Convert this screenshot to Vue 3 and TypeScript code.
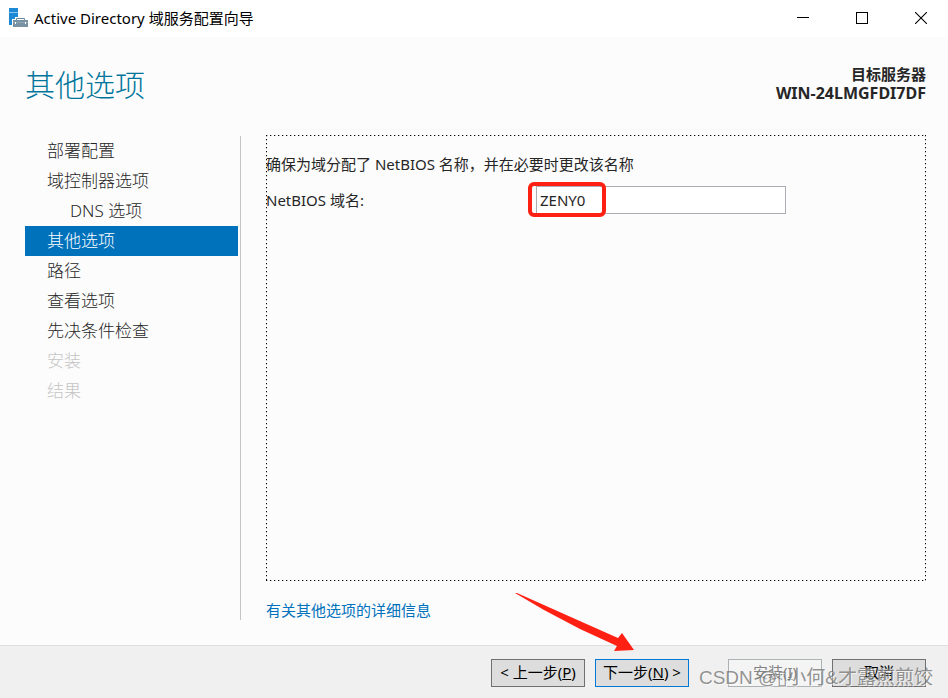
<script setup lang="ts">
import { ref } from 'vue'

interface Step {
  label: string
  indent?: boolean
  disabled?: boolean
}

const steps: Step[] = [
  { label: '部署配置' },
  { label: '域控制器选项' },
  { label: 'DNS 选项', indent: true },
  { label: '其他选项' },
  { label: '路径' },
  { label: '查看选项' },
  { label: '先决条件检查' },
  { label: '安装', disabled: true },
  { label: '结果', disabled: true },
]

const current = ref(3)
const netbiosName = ref('ZENY0')
</script>

<template>
  <div class="window">
    <header class="titlebar">
      <svg class="app-icon" width="20" height="20" viewBox="0 0 20 20" aria-hidden="true">
        <rect x="0" y="0" width="9" height="17" fill="#1e8ad6" />
        <rect x="0" y="4" width="9" height="1" fill="#8cc6ee" />
        <path d="M3 19V11H6V9H17V11H20V19H3z" fill="#fff" />
        <path d="M7.500 12.500V10.500H15.500V12.500" fill="none" stroke="#6f8a9c" />
        <rect x="4" y="12" width="15" height="7" fill="#7892a4" />
        <path d="M4 14.500H19" stroke="#8fa5b4" />
        <rect x="6" y="14" width="1" height="2" fill="#fff" />
        <rect x="16" y="14" width="1" height="2" fill="#fff" />
      </svg>
      <span class="app-title">Active Directory 域服务配置向导</span>
      <div class="controls">
        <button type="button" aria-label="最小化">
          <svg width="12" height="12" viewBox="0 0 12 12"><path d="M0 5.500H12" stroke="#000" /></svg>
        </button>
        <button type="button" aria-label="最大化">
          <svg width="12" height="12" viewBox="0 0 12 12"><rect x=".5" y=".5" width="11" height="11" fill="none" stroke="#000" /></svg>
        </button>
        <button type="button" aria-label="关闭">
          <svg width="12" height="12" viewBox="0 0 12 12"><path d="M0 0L12 12M12 0L0 12" stroke="#000" stroke-width="1.100" /></svg>
        </button>
      </div>
    </header>

    <section class="heading">
      <h1>其他选项</h1>
      <div class="target">
        <div>目标服务器</div>
        <div class="host">WIN-24LMGFDI7DF</div>
      </div>
    </section>

    <div class="body">
      <nav class="steps">
        <button
          v-for="(step, i) in steps"
          :key="step.label"
          type="button"
          class="step"
          :class="{ active: i === current, indent: step.indent }"
          :disabled="step.disabled"
          @click="current = i"
        >{{ step.label }}</button>
      </nav>

      <main class="content">
        <div class="panel">
          <p>确保为域分配了 NetBIOS 名称，并在必要时更改该名称</p>
          <div class="field">
            <label for="netbios">NetBIOS 域名:</label>
            <div class="input-wrap">
              <input id="netbios" v-model="netbiosName" type="text" />
              <span class="highlight"></span>
            </div>
          </div>
        </div>
        <a class="more" href="#">有关其他选项的详细信息</a>
      </main>
    </div>

    <footer class="footer">
      <button type="button" class="btn">&lt; 上一步(<u>P</u>)</button>
      <div class="next-wrap">
        <button type="button" class="btn primary">下一步(<u>N</u>) &gt;</button>
        <svg class="arrow" width="120" height="60" viewBox="0 0 120 60" aria-hidden="true">
          <path d="M1 1L3 1L68 30L104 46L108 41L120 58L100 59L103 54L66 37L30 18Z" fill="#ff2014" />
        </svg>
      </div>
      <button type="button" class="btn install" disabled>安装(<u>I</u>)</button>
      <button type="button" class="btn">取消</button>
      <span class="watermark">CSDN @▯小何&amp;才露煎煎饺</span>
    </footer>
  </div>
</template>

<style>
body {
  margin: 0;
  background: #fcfcfc;
}
</style>

<style scoped>
.window {
  display: flex;
  flex-direction: column;
  min-height: 100vh;
  background: #fcfcfc;
  color: #262626;
  font: 15px/20px "Noto Sans", "Noto Sans CJK SC", sans-serif;
}

button,
input {
  font: inherit;
  color: inherit;
}

.titlebar {
  display: flex;
  align-items: center;
  height: 36px;
  padding: 0 0 1px 9px;
  background: #fff;
  color: #000;
}

.app-title {
  margin-left: 5px;
}

.controls {
  display: flex;
  gap: 5px;
  align-self: stretch;
  margin-left: auto;
}

.controls button {
  display: flex;
  align-items: center;
  justify-content: center;
  width: 54px;
  padding: 0;
  border: 0;
  background: none;
}

.heading {
  display: flex;
  justify-content: space-between;
  box-sizing: border-box;
  height: 98px;
  padding: 28px 22px 0 25px;
}

h1 {
  margin: 0;
  color: #00759b;
  font-size: 30px;
  font-weight: 300;
  line-height: 40px;
}

.target {
  font-weight: 700;
  line-height: 19px;
  text-align: right;
}

.host {
  font-size: 16px;
}

.body {
  display: flex;
  flex: 1;
  padding: 0 22px 0 25px;
}

.steps {
  display: flex;
  flex-direction: column;
  flex: none;
  width: 213px;
  margin: 1px 0 25px;
  padding-right: 2px;
  border-right: 1px solid #c4c4c4;
}

.step {
  height: 30px;
  padding: 0 0 0 22px;
  border: 0;
  background: none;
  font-size: 17px;
  font-weight: 300;
  text-align: left;
}

.step.indent {
  padding-left: 45px;
}

.step.active {
  background: #0072bc;
  color: #fff;
}

.step:disabled {
  color: #c4c4c4;
}

.content {
  display: flex;
  flex: 1;
  flex-direction: column;
  margin-left: 25px;
}

.panel {
  --dots: #000 0 1px, #bbb 1px 2px, transparent 2px 4px;
  flex: 1;
  background:
    repeating-linear-gradient(90deg, var(--dots)) top / 100% 1px no-repeat,
    repeating-linear-gradient(90deg, var(--dots)) bottom / 100% 1px no-repeat,
    repeating-linear-gradient(180deg, var(--dots)) left / 1px 100% no-repeat,
    repeating-linear-gradient(180deg, var(--dots)) right / 1px 100% no-repeat;
  padding-top: 19px;
}

.panel p {
  margin: 0 0 12px;
}

.field {
  display: grid;
  grid-template-columns: 270px 250px;
  align-items: center;
}

.input-wrap {
  position: relative;
  height: 28px;
}

.input-wrap input {
  box-sizing: border-box;
  width: 100%;
  height: 28px;
  padding: 0 3px;
  border: 1px solid #abadb3;
  border-radius: 0;
  background: #fff;
}

.highlight {
  position: absolute;
  inset: -4px auto -3px -8px;
  box-sizing: border-box;
  width: 78px;
  border: 4px solid #ff2014;
  border-radius: 6px;
  pointer-events: none;
}

.more {
  align-self: flex-start;
  margin: 19px 0 25px;
  color: #0072bc;
  text-decoration: none;
}

.footer {
  position: relative;
  display: flex;
  justify-content: flex-end;
  gap: 10px;
  padding: 13px 22px 11px;
  border-top: 1px solid #dfdfdf;
  background: #f0f0f0;
}

.btn {
  box-sizing: border-box;
  width: 94px;
  height: 28px;
  padding: 0 0 2px;
  border: 1px solid #707070;
  background: #dddddd;
  color: #000;
  white-space: nowrap;
}

.btn.primary {
  border-color: #0078d7;
}

.btn:disabled {
  border-color: #adb2b5;
  background: #f4f4f4;
  color: #838383;
}

.install {
  margin-left: 29px;
}

.next-wrap {
  position: relative;
}

.arrow {
  position: absolute;
  left: -81px;
  bottom: 35px;
  pointer-events: none;
}

.watermark {
  position: absolute;
  right: 15px;
  bottom: 7px;
  color: rgba(120, 120, 120, 0.8);
  font-family: "Liberation Sans", "Noto Sans CJK SC", sans-serif;
  font-size: 19px;
  line-height: 26px;
  text-shadow: 1px 1px 0 rgba(255, 255, 255, 0.6);
  white-space: nowrap;
  pointer-events: none;
}
</style>
